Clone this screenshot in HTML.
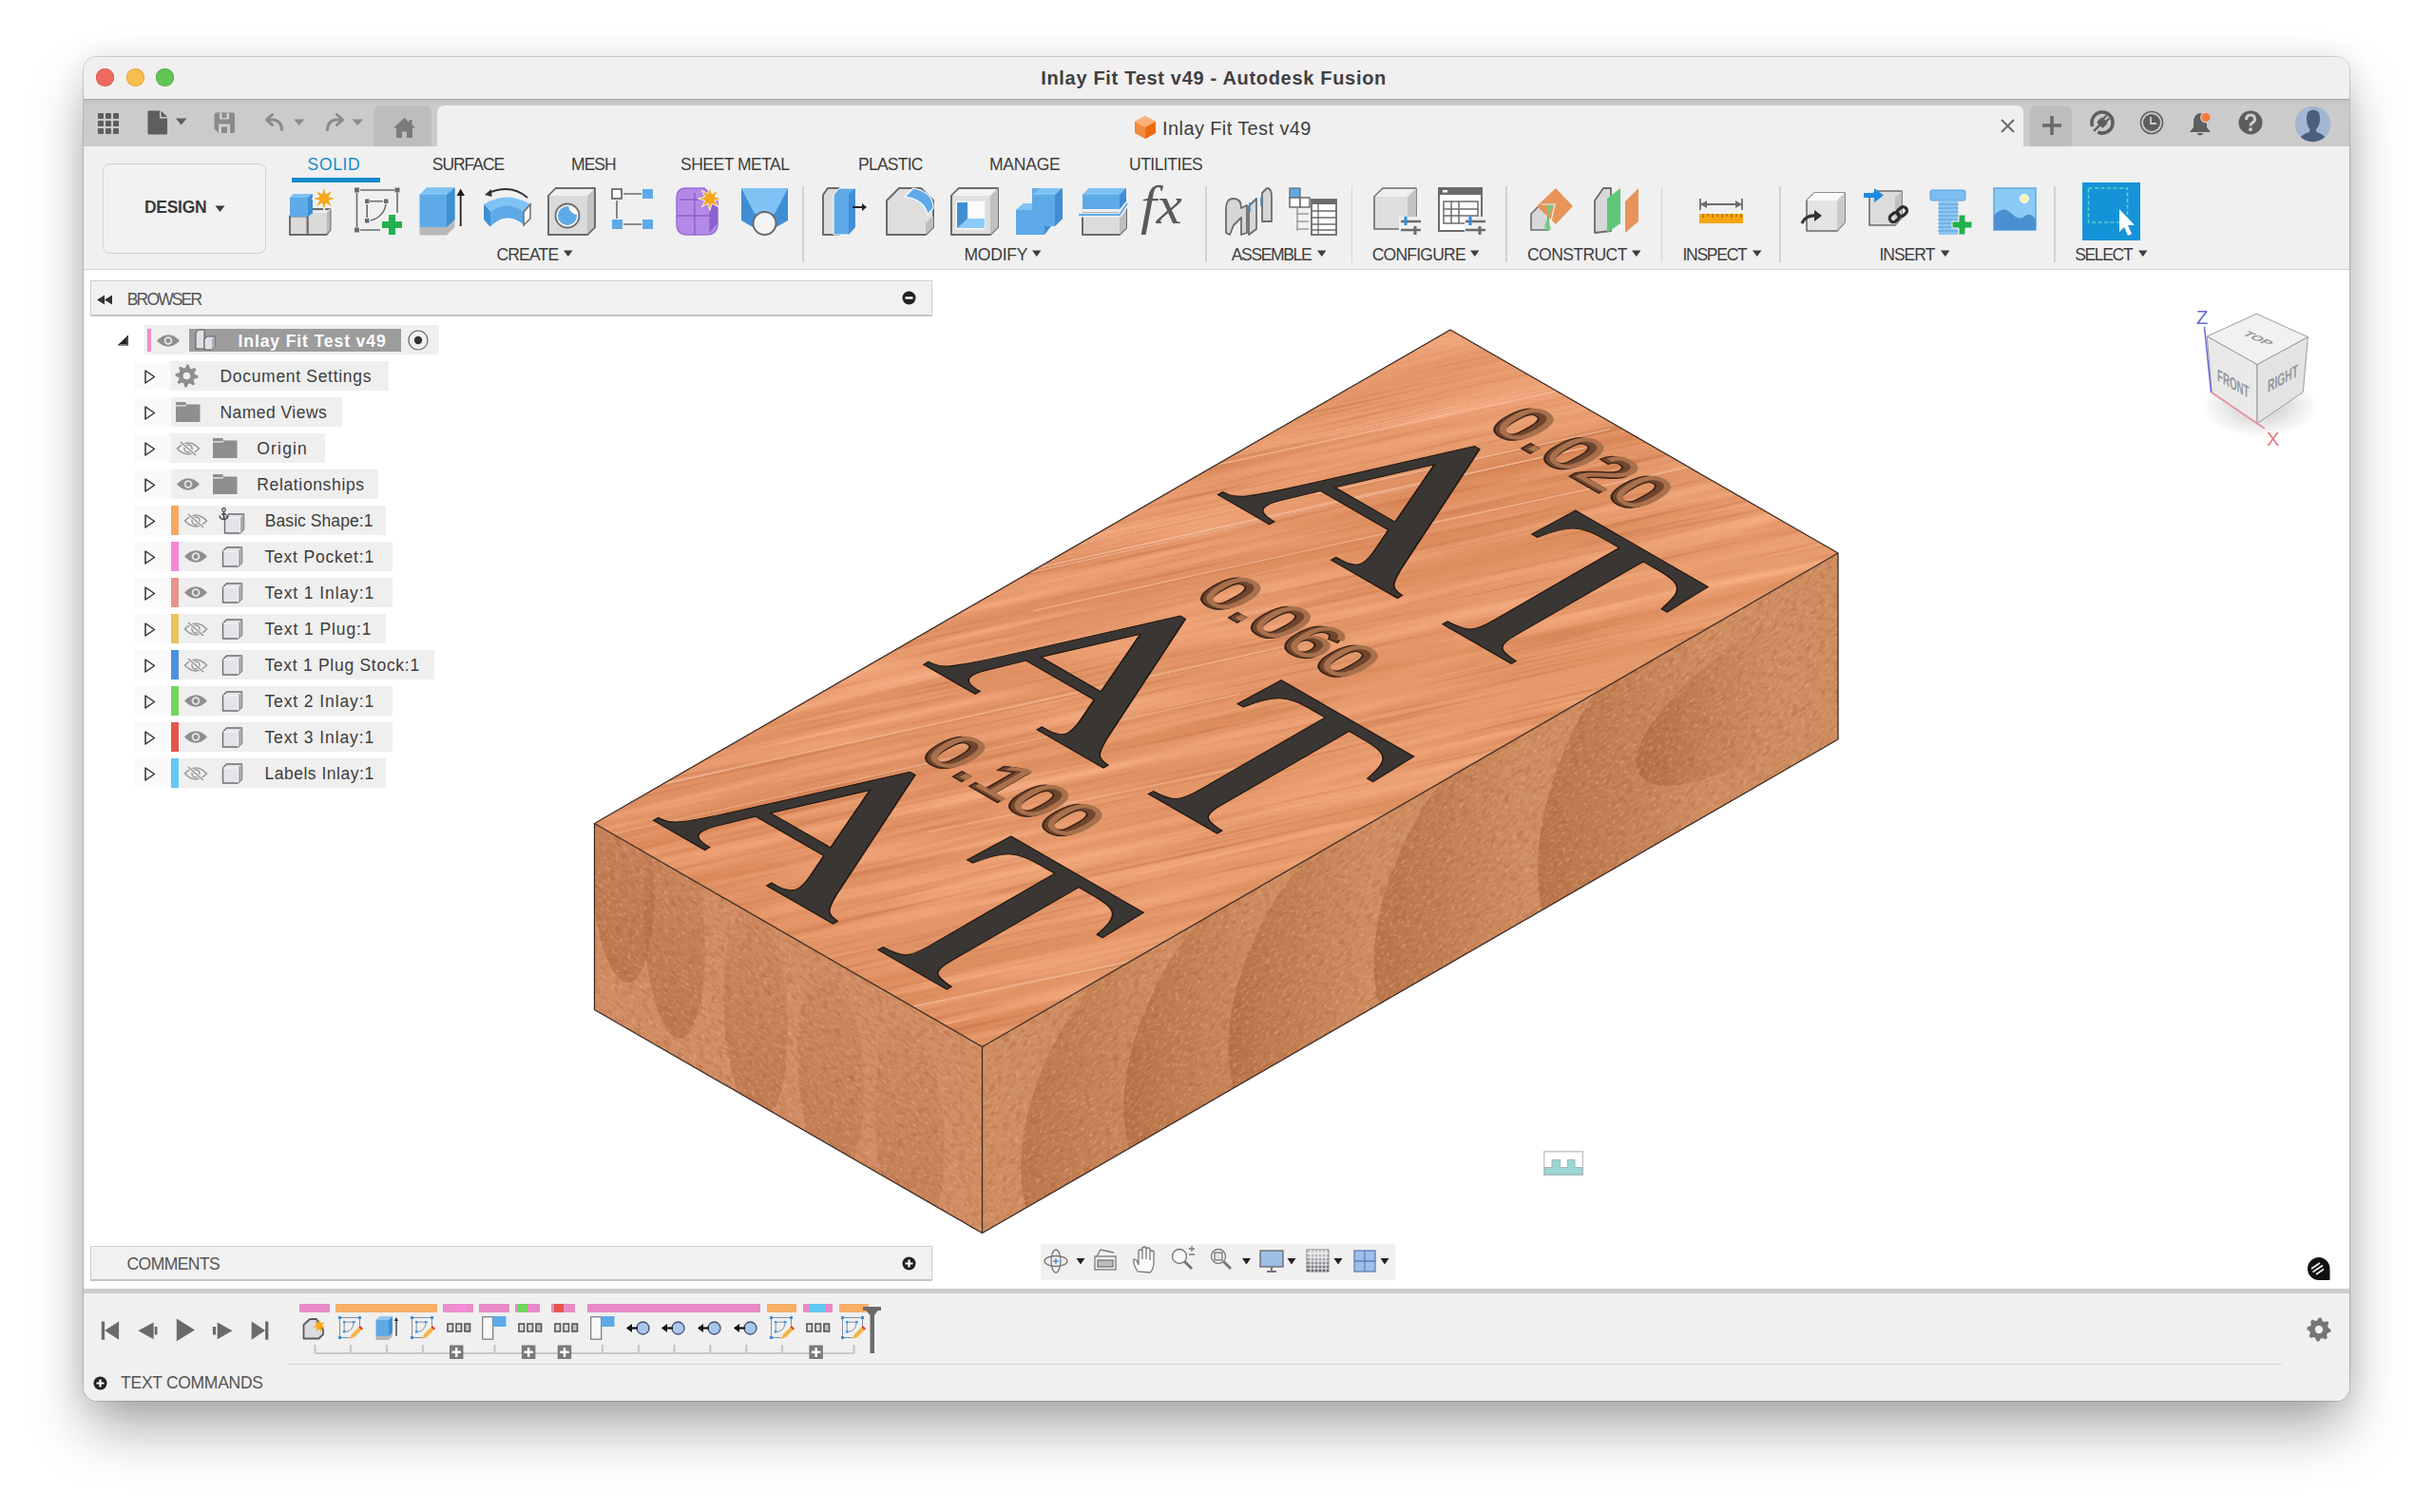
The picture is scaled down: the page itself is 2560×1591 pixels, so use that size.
<!DOCTYPE html>
<html><head><meta charset="utf-8">
<style>
*{margin:0;padding:0;box-sizing:border-box}
html,body{width:2560px;height:1591px;overflow:hidden;background:#fff;font-family:"Liberation Sans",sans-serif;color:#3c3c3c}
.a{position:absolute}
svg.a{overflow:visible}
#shadow{position:absolute;left:88px;top:60px;width:2384px;height:1414px;border-radius:14px;background:#f0f0f0;box-shadow:0 0 0 1px rgba(0,0,0,0.15),0 32px 60px -4px rgba(0,0,0,0.34),0 0 30px rgba(0,0,0,0.09)}
#ui{position:absolute;left:0;top:0;width:2560px;height:1591px;clip-path:inset(60px 88px 117px 88px round 14px)}
.tl{white-space:nowrap;line-height:1}
.dot{width:19px;height:19px;border-radius:50%;top:72px}
.tab{top:165px;font-size:18px;color:#3d3d3d}
.grp{top:259px;font-size:18px;color:#3d3d3d}
.sep{top:197px;width:1px;height:80px;background:#cfcfcf}
.row{height:31px;background:#efefef}
.rt{font-size:18px;color:#3d3d3d;top:7px}
</style></head><body>
<div id="shadow"></div>
<div id="ui">
<div class="a" style="left:88px;top:60px;width:2384px;height:44px;background:#f1eff0"></div>
<div class="a" style="left:88px;top:103.5px;width:2384px;height:1.2px;background:#a9a9a9"></div>
<div class="a" style="left:100.5px;top:72px;width:19px;height:19px;border-radius:50%;background:#ee6a5e;box-shadow:inset 0 0 0 0.8px #d55a50"></div>
<div class="a" style="left:132.5px;top:72px;width:19px;height:19px;border-radius:50%;background:#f5be4f;box-shadow:inset 0 0 0 0.8px #dba540"></div>
<div class="a" style="left:164px;top:72px;width:19px;height:19px;border-radius:50%;background:#5fc454;box-shadow:inset 0 0 0 0.8px #4cad41"></div>
<div class="a" style="left:88px;top:104px;width:2384px;height:50px;background:#cbcbcb"></div>
<div class="a" style="left:88px;top:104px;width:2384px;height:6px;background:linear-gradient(#c0c0c0,#cbcbcb)"></div>
<div class="a" style="left:88px;top:104px;width:2384px;height:1px;background:#a6a6a6"></div>
<div class="a" style="left:393px;top:111px;width:61px;height:43px;background:#bdbdbd;border-radius:7px 7px 0 0"></div>
<div class="a" style="left:460px;top:111px;width:1669px;height:43px;background:#f0f0f0;border-radius:7px 7px 0 0"></div>
<div class="a" style="left:2136px;top:111px;width:44px;height:43px;background:#bdbdbd;border-radius:7px 7px 0 0"></div>
<svg class="a" style="left:102px;top:118px" width="24" height="24"><rect x="1" y="1" width="6" height="6" rx="1" fill="#5e5e5e"/><rect x="1" y="9" width="6" height="6" rx="1" fill="#5e5e5e"/><rect x="1" y="17" width="6" height="6" rx="1" fill="#5e5e5e"/><rect x="9" y="1" width="6" height="6" rx="1" fill="#5e5e5e"/><rect x="9" y="9" width="6" height="6" rx="1" fill="#5e5e5e"/><rect x="9" y="17" width="6" height="6" rx="1" fill="#5e5e5e"/><rect x="17" y="1" width="6" height="6" rx="1" fill="#5e5e5e"/><rect x="17" y="9" width="6" height="6" rx="1" fill="#5e5e5e"/><rect x="17" y="17" width="6" height="6" rx="1" fill="#5e5e5e"/></svg>
<svg class="a" style="left:155px;top:116px" width="44" height="27"><path d="M0.5 1.5 Q0.5 0.5 1.5 0.5 H13 L21 8.5 V24.5 Q21 25.5 20 25.5 H1.5 Q0.5 25.5 0.5 24.5 Z" fill="#5e5e5e"/><path d="M13 0.5 V8.5 H21" fill="#cecece"/><path d="M14.5 0.5 L21 7 H14.5 Z" fill="#5e5e5e"/><path d="M30 8.5 H41.5 L35.7 15.5 Z" fill="#5e5e5e"/></svg>
<svg class="a" style="left:225px;top:118px" width="24" height="24"><path d="M0.5 2.5 Q0.5 0.5 2.5 0.5 H20 Q22 0.5 22 2.5 V20 Q22 22 20 22 H5 L0.5 17.5 Z" fill="#8a8a8a"/><rect x="6" y="1" width="10" height="6.5" fill="#cecece"/><rect x="8.5" y="1" width="5" height="5" fill="#8a8a8a"/><rect x="5" y="12.5" width="12" height="9.5" fill="#cecece"/><rect x="8" y="15.5" width="6" height="6.5" fill="#8a8a8a"/></svg>
<svg class="a" style="left:277px;top:118px" width="110" height="24"><g fill="none" stroke="#8a8a8a" stroke-width="3" stroke-linecap="round" stroke-linejoin="round"><path d="M4 8 H11 Q19 9 19.5 18.5"/><path d="M9.5 2.5 L3.5 8 L9.5 13.5"/><path d="M83 8 H76 Q68 9 67.5 18.5"/><path d="M77.5 2.5 L83.5 8 L77.5 13.5"/></g><path d="M32 7.5 H43.5 L37.7 14 Z M93.5 7.5 H105 L99.2 14 Z" fill="#8a8a8a"/></svg>
<svg class="a" style="left:413px;top:123px" width="25" height="23"><path d="M12.5 1 L24 11.5 H21 V22 H15 V15.5 H10 V22 H4 V11.5 H1 Z" fill="#7a7a7a"/><rect x="17.5" y="3" width="3" height="6" fill="#7a7a7a"/><rect x="11.3" y="17" width="2.4" height="5" fill="#bdbdbd"/></svg>
<svg class="a" style="left:1193px;top:121px" width="24" height="26"><polygon points="12,1 23,7 23,19 12,25 1,19 1,7" fill="#f38a3c"/><polygon points="12,1 23,7 12,13 1,7" fill="#fbb27a"/><polygon points="12,13 23,7 23,19 12,25" fill="#ec6a12"/></svg>
<svg class="a" style="left:2105px;top:125px" width="15" height="15"><path d="M1 1 L14 14 M14 1 L1 14" stroke="#6a6a6a" stroke-width="2"/></svg>
<svg class="a" style="left:2149px;top:122px" width="20" height="20"><path d="M10 0 V20 M0 10 H20" stroke="#6a6a6a" stroke-width="3.6"/></svg>
<svg class="a" style="left:2199px;top:116px" width="26" height="26"><path d="M2.7 16.8 A11 11 0 1 1 8.4 23" fill="none" stroke="#5e5e5e" stroke-width="3.6"/><g transform="rotate(45 13 13)"><rect x="8.5" y="9" width="9" height="8" rx="1.5" fill="#5e5e5e"/><rect x="9.8" y="4.5" width="2.2" height="5" fill="#5e5e5e"/><rect x="14" y="4.5" width="2.2" height="5" fill="#5e5e5e"/><rect x="11.8" y="16.5" width="2.4" height="9" fill="#5e5e5e"/></g></svg>
<svg class="a" style="left:2251px;top:116px" width="26" height="26"><circle cx="13" cy="13" r="11.5" fill="none" stroke="#5e5e5e" stroke-width="1.6"/><circle cx="13" cy="13" r="9" fill="#5e5e5e"/><path d="M12 7 V14 H18" fill="none" stroke="#cecece" stroke-width="1.8"/></svg>
<svg class="a" style="left:2302px;top:116px" width="28" height="28"><path d="M13 3 Q6 4 6 13 V18 L2 23 H24 L20 18 V13 Q20 4 13 3 Z" fill="#5e5e5e"/><path d="M9.5 24 Q13 29 16.5 24 Z" fill="#5e5e5e"/><circle cx="19" cy="7.5" r="5.3" fill="#f47d3a" stroke="#cecece" stroke-width="1.2"/></svg>
<svg class="a" style="left:2355px;top:116px" width="26" height="26"><circle cx="13" cy="13" r="12.5" fill="#5e5e5e"/><path d="M8.5 10 Q8.5 5 13 5 Q17.5 5 17.5 9.5 Q17.5 12 14.5 13.5 Q13 14.5 13 16.5" fill="none" stroke="#cecece" stroke-width="3"/><rect x="11.3" y="18.5" width="3.4" height="3.4" fill="#cecece"/></svg>
<svg class="a" style="left:2413.5px;top:110.5px" width="39" height="39"><defs><clipPath id="avc"><circle cx="19.5" cy="19.5" r="18.8"/></clipPath></defs><circle cx="19.5" cy="19.5" r="18.8" fill="#a3b7d2"/><g clip-path="url(#avc)" fill="#4b5f7e"><path d="M13 15 Q12 5 20 4.5 Q28 5 27 15 Q26.5 22 23 25 L23.5 28 Q33 30 35 40 H4 Q6 30 16 28 L16.5 25 Q13.5 22 13 15 Z"/></g></svg>
<div class="a" style="left:88px;top:154px;width:2384px;height:130px;background:#f0f0f0"></div>
<div class="a" style="left:88px;top:282.5px;width:2384px;height:1.5px;background:#d3d3d3"></div>
<div class="a" style="left:107.5px;top:172px;width:172px;height:95px;border:1.5px solid #d0d0d0;border-radius:8px;background:#f2f2f2"></div>
<svg class="a" style="left:226px;top:216px" width="12" height="8"><path d="M0.5 0.5 H10.5 L5.5 7 Z" fill="#3a3a3a"/></svg>
<div class="a" style="left:307px;top:187px;width:93px;height:5px;background:#1689c9"></div>
<svg class="a" style="left:304px;top:197px" width="50" height="50" viewBox="0 0 50 50">
<path d="M19.5 30.5 L19.5 26 L23 23 L43.5 23 L43.5 45 L39.5 50 L19.5 50 Z" fill="#dadada" stroke="#6b6b6b" stroke-width="2" stroke-linejoin="round"/>
<path d="M19.5 26 L40 26 L43.5 23" fill="none" stroke="#fff" stroke-width="1.2"/>
<path d="M40 26 L40 50" stroke="#b9b9b9" stroke-width="0"/>
<polygon points="40,26 43.5,23 43.5,45 40,49" fill="#b9b9b9"/>
<rect x="1" y="30.5" width="18.5" height="19.5" fill="#dadada" stroke="#6b6b6b" stroke-width="2"/>
<polygon points="1,11 5,7 25,7 25,27 19.5,31 1,31" fill="#5eaae8"/>
<polygon points="1,11 5,7 25,7 20,11" fill="#7fc2f4"/>
<polygon points="20,11 25,7 25,27 20,31" fill="#3f8ed4"/>
<polygon points="37.0,-1.0 39.1,6.9 46.2,2.8 42.1,9.9 50.0,12.0 42.1,14.1 46.2,21.2 39.1,17.1 37.0,25.0 34.9,17.1 27.8,21.2 31.9,14.1 24.0,12.0 31.9,9.9 27.8,2.8 34.9,6.9" fill="#f6a71c" stroke="#f3f3f3" stroke-width="1"/>
</svg>
<svg class="a" style="left:372.5px;top:197px" width="50" height="50" viewBox="0 0 50 50">
<g fill="#6b6b6b"><rect x="0" y="0.5" width="5" height="5"/><rect x="42.5" y="0.5" width="5" height="5"/><rect x="0" y="42.5" width="5" height="5"/>
<rect x="11" y="12.5" width="4.5" height="4.5"/><rect x="31" y="12.5" width="4.5" height="4.5"/><rect x="11" y="33" width="4.5" height="4.5"/></g>
<g stroke="#6b6b6b" stroke-width="1.6" fill="none"><path d="M6 3 H42 M2.5 6 V42 M45 6 V27 M6 45 H27 M16 14.8 H30 M13.2 18 V32 M33 18 Q31 31 17 35"/></g>
<path d="M36 29 H43 V36 H50 V43 H43 V50 H36 V43 H29 V36 H36 Z" fill="#22b14c"/>
</svg>
<svg class="a" style="left:441px;top:197px" width="50" height="50" viewBox="0 0 50 50">
<polygon points="0.5,42 29,42 37.5,34 37.5,42 29,50.5 0.5,50.5" fill="#b8b8b8"/>
<polygon points="0.5,8 8,0.5 37.5,0.5 37.5,34 29,42 0.5,42" fill="#5eaae8"/>
<polygon points="0.5,8 8,0.5 37.5,0.5 29,8" fill="#7fc2f4"/>
<polygon points="29,8 37.5,0.5 37.5,34 29,42" fill="#3f8ed4"/>
<path d="M43.7 41 V6" stroke="#222" stroke-width="1.8"/><path d="M39.5 9 L43.7 1.5 L48 9 Z" fill="#222"/>
</svg>
<svg class="a" style="left:508px;top:197px" width="50" height="50" viewBox="0 0 50 50">
<path d="M1 18 Q25 3 50 18 L50 33 L43 40 Q25 25 8 42 L1 34 Z" fill="#5eaae8" stroke="#fff" stroke-width="1"/>
<path d="M1 18 Q25 3 50 18 L43 26 Q25 13 8 26 Z" fill="#7fc2f4"/>
<path d="M1 18 L8 26 L8 42 L1 34 Z" fill="#3f8ed4"/>
<path d="M43 26 L50 18 L50 33 L43 40 Z" fill="#fff" stroke="#6b6b6b" stroke-width="1.5"/>
<path d="M47 11 Q30 -4 6 6" fill="none" stroke="#333" stroke-width="1.8"/><path d="M2 8 L9 2 L9.5 10 Z" fill="#333"/>
</svg>
<svg class="a" style="left:575.5px;top:197px" width="50" height="50" viewBox="0 0 50 50">
<polygon points="1,9 9,1 50,1 50,42 42,50 1,50" fill="#dadada" stroke="#6b6b6b" stroke-width="2" stroke-linejoin="round"/>
<polygon points="2,9 9,2 49,2 42,9" fill="#efefef"/>
<polygon points="42,9 49,2 49,42 42,49" fill="#c4c4c4"/>
<circle cx="21" cy="30" r="12.5" fill="#f4f4f4" stroke="#6b6b6b" stroke-width="1.8"/>
<circle cx="21" cy="30" r="10" fill="#5eaae8"/>
<path d="M24 20.5 A10 10 0 0 1 30.5 27 A9 9 0 0 1 24 20.5 Z" fill="#fff"/>
<path d="M22 20 Q24 28 31 29 Q31 21 22 20 Z" fill="#fff"/>
</svg>
<svg class="a" style="left:643px;top:197px" width="50" height="50" viewBox="0 0 50 50">
<rect x="1" y="2" width="10" height="10" fill="#fff" stroke="#6b6b6b" stroke-width="1.8"/>
<rect x="33" y="2" width="11" height="10" fill="#5eaae8"/><rect x="1" y="34" width="11" height="10" fill="#5eaae8"/><rect x="33" y="34" width="11" height="10" fill="#5eaae8"/>
<path d="M13 7 H32 M6 14 V33 M13 39 H32" stroke="#6b6b6b" stroke-width="1.6"/>
</svg>
<svg class="a" style="left:711px;top:197px" width="50" height="50" viewBox="0 0 50 50">
<path d="M10 1 H30 L44 14 V38 Q44 50 32 50 H12 Q1 50 1 38 V12 Q1 1 10 1 Z" fill="#b48ae8" stroke="#9a6dd6" stroke-width="1.5"/>
<path d="M4 13 H36 V47 M1 30 H44 M20 6 V50" stroke="#8a5ec8" stroke-width="1.3" fill="none"/>
<path d="M36 13 L44 20 V38 L36 47 Z" fill="#8c62cf"/>
<polygon points="36.0,-0.5 38.1,6.9 44.8,3.2 41.1,9.9 48.5,12.0 41.1,14.1 44.8,20.8 38.1,17.1 36.0,24.5 33.9,17.1 27.2,20.8 30.9,14.1 23.5,12.0 30.9,9.9 27.2,3.2 33.9,6.9" fill="#f6a71c" stroke="#f3f3f3" stroke-width="1"/>
</svg>
<svg class="a" style="left:779px;top:197px" width="50" height="50" viewBox="0 0 50 50">
<polygon points="1,1 50,1 50,35 36,43 15,43 1,35" fill="#3f8ed4"/>
<polygon points="1,1 50,1 36,28 15,28" fill="#7fc2f4"/>
<circle cx="25.5" cy="38" r="12" fill="#f4f4f4" stroke="#6b6b6b" stroke-width="2"/>
</svg>
<svg class="a" style="left:865px;top:197px" width="50" height="50" viewBox="0 0 50 50">
<polygon points="1,8 6,1 18,1 18,50 1,50" fill="#dcdcdc" stroke="#6b6b6b" stroke-width="2" stroke-linejoin="round"/>
<polygon points="12,8 18,1 35,1 35,42 28,50 12,50" fill="#5eaae8" stroke="#fff" stroke-width="1"/>
<polygon points="28,8 35,1 35,42 28,50" fill="#3f8ed4"/>
<path d="M32 21 H44" stroke="#222" stroke-width="1.8"/><path d="M42 17 L47 21 L42 25 Z" fill="#222"/>
</svg>
<svg class="a" style="left:932px;top:197px" width="50" height="50" viewBox="0 0 50 50">
<polygon points="1,14 14,1 27,1 37,1 50,14 50,42 42,50 1,50" fill="#dedede" stroke="#6b6b6b" stroke-width="2" stroke-linejoin="round"/>
<polygon points="42,38 50,30 50,42 42,50" fill="#bdbdbd"/>
<path d="M20 10 L29 1 Q50 5 50 22 L44 29 Q41 13 20 10 Z" fill="#5eaae8" stroke="#fff" stroke-width="1.2"/>
</svg>
<svg class="a" style="left:1000px;top:197px" width="50" height="50" viewBox="0 0 50 50">
<polygon points="1,9 9,1 50,1 50,42 42,50 1,50" fill="#dedede" stroke="#6b6b6b" stroke-width="2" stroke-linejoin="round"/>
<polygon points="2,9 9,2 49,2 42,9" fill="#f2f2f2"/>
<polygon points="42,9 50,1 50,42 42,50" fill="#c0c0c0"/>
<rect x="5.5" y="14.5" width="31" height="30" fill="#fafafa"/>
<polygon points="7,16 18,16 18,33 36,33 36,43 7,43" fill="#8ccbf7"/>
<polygon points="7,16 18,16 18,33 7,43" fill="#3f8ed4"/>
</svg>
<svg class="a" style="left:1067.5px;top:197px" width="50" height="50" viewBox="0 0 50 50">
<polygon points="1,24 9,17 18,17 18,1 50,1 50,33 42,41 31,41 31,50 1,50" fill="#5eaae8"/>
<polygon points="18,8 26,1 50,1 42,8" fill="#7fc2f4"/><polygon points="1,24 9,17 18,17 18,24" fill="#7fc2f4"/>
<polygon points="42,8 50,1 50,33 42,41" fill="#3f8ed4"/><polygon points="31,41 38,41 31,50" fill="#3f8ed4"/>
</svg>
<svg class="a" style="left:1134.5px;top:197px" width="50" height="50" viewBox="0 0 50 50">
<polygon points="4,27 42,27 50,20 50,43 43,50 4,50" fill="#dcdcdc" stroke="#6b6b6b" stroke-width="2" stroke-linejoin="round"/>
<polygon points="43,30 50,23 50,43 43,50" fill="#bebebe"/>
<polygon points="4,8 11,1 50,1 50,16 43,23 4,23" fill="#5eaae8"/>
<polygon points="4,8 11,1 50,1 43,8" fill="#7fc2f4"/><polygon points="43,8 50,1 50,16 43,23" fill="#3f8ed4"/>
<path d="M0 29 H43 L51 17" fill="none" stroke="#f0f0f0" stroke-width="5"/>
<path d="M0 29 H43 L51 17" fill="none" stroke="#5eaae8" stroke-width="1.8"/>
</svg>
<svg class="a" style="left:1202px;top:197px" width="50" height="50" viewBox="0 0 50 50"><text x="-2" y="38" font-family="Liberation Serif" font-style="italic" font-size="58" fill="#5a5a5a" transform="scale(1.05 1)">fx</text></svg>
<svg class="a" style="left:1287.5px;top:197px" width="50" height="50" viewBox="0 0 50 50">
<path d="M2 48 V22 Q2 12 10 12 Q18 12 18 22 L24 19 V48 L18 50 V32 L10 40 L6 50 Z" fill="#d6d6d6" stroke="#6b6b6b" stroke-width="1.8" stroke-linejoin="round"/>
<path d="M26 50 V20 L34 12 V44 Z" fill="#d6d6d6" stroke="#6b6b6b" stroke-width="1.8" stroke-linejoin="round"/>
<path d="M40 36 V6 L45 1 Q50 1 50 10 V36 Z" fill="#d6d6d6" stroke="#6b6b6b" stroke-width="1.8" stroke-linejoin="round"/>
<path d="M27 16 V26 M39 10 V20" stroke="#3c8edc" stroke-width="1.6"/>
</svg>
<svg class="a" style="left:1355.5px;top:197px" width="50" height="50" viewBox="0 0 50 50">
<rect x="1" y="1" width="11" height="10" fill="#5eaae8" stroke="#6b6b6b" stroke-width="1.2"/>
<rect x="1" y="11" width="11" height="10" fill="#fff" stroke="#6b6b6b" stroke-width="1.5"/><rect x="12" y="11" width="10" height="10" fill="#fff" stroke="#6b6b6b" stroke-width="1.5"/>
<path d="M9 22 V46 M9 28 H21 M9 36 H21 M9 44 H21" stroke="#9a9a9a" stroke-width="1.5"/>
<rect x="24" y="13" width="26" height="37" fill="#fff" stroke="#6b6b6b" stroke-width="1.8"/>
<rect x="24" y="13" width="26" height="5" fill="#6b6b6b"/>
<path d="M24 25 H50 M24 32 H50 M24 39 H50 M24 45 H50 M31 18 V50" stroke="#6b6b6b" stroke-width="1.3"/>
</svg>
<svg class="a" style="left:1444.5px;top:197px" width="50" height="50" viewBox="0 0 50 50">
<polygon points="1,10 10,1 45,1 45,36 36,44 1,44" fill="#dedede" stroke="#6b6b6b" stroke-width="1.6" stroke-linejoin="round"/>
<polygon points="36,10 45,1 45,36 36,44" fill="#c3c3c3"/><polygon points="2,10 10,2 44,2 36,10" fill="#efefef"/>
<rect x="27" y="31" width="23" height="19" fill="#f0f0f0"/>
<path d="M29 36 H50 M29 45 H50" stroke="#6b6b6b" stroke-width="2.6"/><path d="M44 41 V50" stroke="#6b6b6b" stroke-width="3"/><path d="M34 31 V40" stroke="#2f8ee0" stroke-width="3"/>
</svg>
<svg class="a" style="left:1513px;top:197px" width="50" height="50" viewBox="0 0 50 50">
<rect x="1" y="1" width="45" height="45" fill="#fff" stroke="#6b6b6b" stroke-width="2"/>
<rect x="1" y="1" width="45" height="7" fill="#6b6b6b"/><rect x="5" y="3" width="5" height="2.5" fill="#fff"/>
<path d="M6 15 H42 V38 H6 Z M6 23 H42 M6 30 H42 M14 15 V38 M22 15 V38" fill="none" stroke="#6b6b6b" stroke-width="1.5"/>
<rect x="28" y="31" width="22" height="19" fill="#f0f0f0"/>
<path d="M29 36 H50 M29 45 H50" stroke="#6b6b6b" stroke-width="2.6"/><path d="M44 41 V50" stroke="#6b6b6b" stroke-width="3"/><path d="M34 31 V40" stroke="#2f8ee0" stroke-width="3"/>
</svg>
<svg class="a" style="left:1609px;top:197px" width="50" height="50" viewBox="0 0 50 50">
<polygon points="2,28 9,21 20,21 20,45 2,45" fill="#d8d8d8" stroke="#6b6b6b" stroke-width="1.6"/>
<polygon points="28,1 46,20 28,39 8,20" fill="#e8945a"/>
<polygon points="18,18 26,18 16,40 17,45 23,45" fill="#6ccf7e" opacity="0.8"/>
<path d="M22 40 L27 18 H13" fill="none" stroke="#f0f0f0" stroke-width="1.2"/>
</svg>
<svg class="a" style="left:1677px;top:197px" width="50" height="50" viewBox="0 0 50 50">
<polygon points="1,14 10,1 18,1 18,46 1,48" fill="#d8d8d8" stroke="#6b6b6b" stroke-width="1.8" stroke-linejoin="round"/>
<polygon points="14,12 28,1 28,38 14,48" fill="#5ec777"/>
<polygon points="33,15 47,1 47,36 33,48" fill="#e8945a"/>
</svg>
<svg class="a" style="left:1959.5px;top:197px" width="50" height="50" viewBox="0 0 50 50">
<polygon points="7,11 14,4 41,4 41,32 34,40 7,40" fill="#dcdcdc" stroke="#6b6b6b" stroke-width="1.6" stroke-linejoin="round"/>
<polygon points="34,11 41,4 41,32 34,40" fill="#c0c0c0"/>
<path d="M1 8.5 H13" stroke="#1f8ae0" stroke-width="5"/><path d="M12 1 L22 8.5 L12 16 Z" fill="#1f8ae0"/>
<g fill="none" stroke="#2e2e2e" stroke-width="3.2"><rect x="28" y="28" width="11" height="8" rx="4" transform="rotate(-40 33 32)"/><rect x="36" y="22" width="11" height="8" rx="4" transform="rotate(-40 41 26)"/></g>
</svg>
<svg class="a" style="left:2097px;top:197px" width="50" height="50" viewBox="0 0 50 50">
<rect x="1" y="1" width="44" height="44" fill="#8ccaf6" stroke="#5ea8e4" stroke-width="1.5"/>
<path d="M1 45 V30 Q10 18 20 28 Q28 36 34 30 Q40 26 45 34 V45 Z" fill="#4a90d0"/>
<circle cx="33" cy="12" r="4.5" fill="#fbf3b0" stroke="#fff" stroke-width="1"/>
</svg>
<svg class="a" style="left:1894.5px;top:202px" width="50" height="50" viewBox="0 0 50 50">
<polygon points="6,9 14,1 46,1 46,32 38,41 6,41" fill="#e4e4e4" stroke="#6b6b6b" stroke-width="1.6" stroke-linejoin="round"/>
<polygon points="6,9 14,1 46,1 38,9" fill="#fafafa"/><polygon points="38,9 46,1 46,32 38,41" fill="#cacaca"/>
<path d="M1 33 Q5 24 16 25" fill="none" stroke="#333" stroke-width="3.2"/><path d="M14 19 L22 25 L14 31 Z" fill="#333"/>
</svg>
<svg class="a" style="left:2030px;top:199px" width="50" height="50" viewBox="0 0 50 50">
<rect x="1" y="1" width="37" height="11" rx="2" fill="#7cbdf0" stroke="#5aa0dc" stroke-width="1"/>
<rect x="10" y="12" width="20" height="36" fill="#8cc6f2"/>
<path d="M9 16 H31 M9 20 H31 M9 24 H31 M9 28 H31 M9 32 H31 M9 36 H31 M9 40 H31 M9 44 H31" stroke="#5a9ed8" stroke-width="1.2"/>
<path d="M31 27 H38 V34 H45 V41 H38 V48 H31 V41 H24 V34 H31 Z" fill="#22b14c" stroke="#f0f0f0" stroke-width="1"/>
</svg>
<svg class="a" style="left:1787px;top:208px" width="50" height="50" viewBox="0 0 50 50">
<path d="M2 1 V13 M46 1 V13 M3 7 H45" stroke="#6b6b6b" stroke-width="1.8"/>
<path d="M2 7 L9 3 V11 Z M46 7 L39 3 V11 Z" fill="#6b6b6b"/>
<rect x="1" y="17" width="46" height="10" fill="#f5a70d"/>
<path d="M5 17 V21 M10 17 V20 M15 17 V21 M20 17 V20 M25 17 V21 M30 17 V20 M35 17 V21 M40 17 V20 M45 17 V21" stroke="#7a5a10" stroke-width="1"/>
</svg>
<svg class="a" style="left:2190.5px;top:192px" width="61" height="61"><rect x="0" y="0" width="61" height="61" fill="#1593d8"/><rect x="6.5" y="6" width="41" height="36" fill="none" stroke="#5fd3c8" stroke-width="1.6" stroke-dasharray="4 2.5"/><path d="M39 28 L39 52 L44 47 L48 56 L52 54 L48 45 L55 45 Z" fill="#fff"/></svg>
<div class="a" style="left:844.3px;top:196px;width:1.5px;height:80px;background:#d2d2d2"></div>
<div class="a" style="left:1268.0px;top:196px;width:1.5px;height:80px;background:#d2d2d2"></div>
<div class="a" style="left:1421.5px;top:196px;width:1.5px;height:80px;background:#d2d2d2"></div>
<div class="a" style="left:1584.0px;top:196px;width:1.5px;height:80px;background:#d2d2d2"></div>
<div class="a" style="left:1747.5px;top:196px;width:1.5px;height:80px;background:#d2d2d2"></div>
<div class="a" style="left:1872.0px;top:196px;width:1.5px;height:80px;background:#d2d2d2"></div>
<div class="a" style="left:2161.0px;top:196px;width:1.5px;height:80px;background:#d2d2d2"></div>
<svg class="a" style="left:593.2px;top:263px" width="10" height="8"><path d="M0 0.5 H9.5 L4.75 7 Z" fill="#3d3d3d"/></svg>
<svg class="a" style="left:1085.7px;top:263px" width="10" height="8"><path d="M0 0.5 H9.5 L4.75 7 Z" fill="#3d3d3d"/></svg>
<svg class="a" style="left:1386px;top:263px" width="10" height="8"><path d="M0 0.5 H9.5 L4.75 7 Z" fill="#3d3d3d"/></svg>
<svg class="a" style="left:1546.8px;top:263px" width="10" height="8"><path d="M0 0.5 H9.5 L4.75 7 Z" fill="#3d3d3d"/></svg>
<svg class="a" style="left:1717px;top:263px" width="10" height="8"><path d="M0 0.5 H9.5 L4.75 7 Z" fill="#3d3d3d"/></svg>
<svg class="a" style="left:1843.5px;top:263px" width="10" height="8"><path d="M0 0.5 H9.5 L4.75 7 Z" fill="#3d3d3d"/></svg>
<svg class="a" style="left:2042px;top:263px" width="10" height="8"><path d="M0 0.5 H9.5 L4.75 7 Z" fill="#3d3d3d"/></svg>
<svg class="a" style="left:2249.6px;top:263px" width="10" height="8"><path d="M0 0.5 H9.5 L4.75 7 Z" fill="#3d3d3d"/></svg>
<div class="a" style="left:88px;top:284px;width:2384px;height:1072px;background:#fff"></div>
<div class="a tl" style="left:1095.2px;top:72.0px;font-size:20px;font-weight:bold;color:#404040;letter-spacing:0.69px;">Inlay Fit Test v49 - Autodesk Fusion</div>
<div class="a tl" style="left:1223.1px;top:125.4px;font-size:20px;color:#3d3d3d;letter-spacing:0.39px;">Inlay Fit Test v49</div>
<div class="a tl" style="left:151.9px;top:210.3px;font-size:17.5px;font-weight:bold;color:#3a3a3a;letter-spacing:-0.27px;">DESIGN</div>
<div class="a tl" style="left:323.6px;top:164.8px;font-size:17.5px;color:#1a8ac6;letter-spacing:0.66px;">SOLID</div>
<div class="a tl" style="left:454.8px;top:164.8px;font-size:17.5px;color:#3d3d3d;letter-spacing:-1.05px;">SURFACE</div>
<div class="a tl" style="left:601.0px;top:164.8px;font-size:17.5px;color:#3d3d3d;letter-spacing:-0.94px;">MESH</div>
<div class="a tl" style="left:716.0px;top:164.8px;font-size:17.5px;color:#3d3d3d;letter-spacing:-0.50px;">SHEET METAL</div>
<div class="a tl" style="left:903.0px;top:164.8px;font-size:17.5px;color:#3d3d3d;letter-spacing:-0.76px;">PLASTIC</div>
<div class="a tl" style="left:1041.0px;top:164.8px;font-size:17.5px;color:#3d3d3d;letter-spacing:-0.22px;">MANAGE</div>
<div class="a tl" style="left:1188.0px;top:164.8px;font-size:17.5px;color:#3d3d3d;letter-spacing:-0.49px;">UTILITIES</div>
<div class="a tl" style="left:522.4px;top:260.4px;font-size:17.5px;color:#3d3d3d;letter-spacing:-0.79px;">CREATE</div>
<div class="a tl" style="left:1014.4px;top:260.4px;font-size:17.5px;color:#3d3d3d;letter-spacing:-0.18px;">MODIFY</div>
<div class="a tl" style="left:1295.8px;top:260.4px;font-size:17.5px;color:#3d3d3d;letter-spacing:-1.36px;">ASSEMBLE</div>
<div class="a tl" style="left:1443.7px;top:260.4px;font-size:17.5px;color:#3d3d3d;letter-spacing:-0.76px;">CONFIGURE</div>
<div class="a tl" style="left:1607.0px;top:260.4px;font-size:17.5px;color:#3d3d3d;letter-spacing:-0.56px;">CONSTRUCT</div>
<div class="a tl" style="left:1770.5px;top:260.4px;font-size:17.5px;color:#3d3d3d;letter-spacing:-1.27px;">INSPECT</div>
<div class="a tl" style="left:1977.4px;top:260.4px;font-size:17.5px;color:#3d3d3d;letter-spacing:-0.98px;">INSERT</div>
<div class="a tl" style="left:2183.2px;top:260.4px;font-size:17.5px;color:#3d3d3d;letter-spacing:-1.33px;">SELECT</div>
<div class="a" style="left:95px;top:295px;width:886px;height:38px;background:#f1f1f1;border:1px solid #cdcdcd;border-bottom:2px solid #c4c4c4"></div>
<svg class="a" style="left:102px;top:310px" width="17" height="11"><path d="M0 5.5 L8 0.5 V10.5 Z M8 5.5 L16 0.5 V10.5 Z" fill="#333"/></svg>
<svg class="a" style="left:949px;top:306px" width="15" height="15"><circle cx="7.5" cy="7.5" r="7" fill="#222"/><rect x="3.5" y="6.3" width="8" height="2.4" fill="#fff"/></svg>
<div class="a" style="left:152px;top:342px;width:310px;height:31px;background:#efefef"></div>
<svg class="a" style="left:123px;top:352px" width="13" height="12"><path d="M12 0.5 V11.5 H0.5 Z" fill="#222"/><path d="M11 3 V10.5 H3" fill="none" stroke="#888" stroke-width="0.8"/></svg>
<div class="a" style="left:154.5px;top:345.5px;width:4.5px;height:24.5px;background:#ea8fc4"></div>
<svg class="a" style="left:164px;top:349.5px" width="26" height="17"><path d="M1 8.5 Q13 -4 25 8.5 Q13 21 1 8.5 Z" fill="#8e8e8e"/><circle cx="13" cy="8.5" r="4.3" fill="#e8e8e8"/><circle cx="13" cy="8.5" r="2.5" fill="#8e8e8e"/></svg>
<div class="a" style="left:199px;top:345.5px;width:223px;height:24.5px;background:#9c9c9c"></div>
<svg class="a" style="left:205px;top:346px" width="23" height="23"><polygon points="1,4 4,1 10,1 10,21 1,21" fill="#dfe1e6" stroke="#555" stroke-width="1"/><polygon points="10,11 13,8 21,8 21,19 18,22 10,22" fill="#dfe1e6" stroke="#555" stroke-width="1"/><polygon points="18,11 21,8 21,19 18,22" fill="#a8abb3"/></svg>
<svg class="a" style="left:429px;top:347px" width="22" height="22"><circle cx="11" cy="11" r="10" fill="#eef0f4" stroke="#666" stroke-width="1.2"/><circle cx="11" cy="11" r="4.2" fill="#333"/></svg>
<div class="a" style="left:141px;top:380px;width:268.2px;height:31px;background:#fafafa"></div>
<div class="a" style="left:180px;top:380px;width:229.2px;height:31px;background:#efefef"></div>
<svg class="a" style="left:152px;top:388.5px" width="12" height="15"><path d="M1 1 L10.5 7.5 L1 14 Z" fill="none" stroke="#333" stroke-width="1.5" stroke-linejoin="round"/></svg>
<svg class="a" style="left:184px;top:383px" width="25" height="25"><polygon points="24.5,12.5 24.3,14.8 20.4,15.8 19.6,17.2 21.0,21.0 19.2,22.5 15.8,20.4 14.2,20.8 12.5,24.5 10.2,24.3 9.2,20.4 7.8,19.6 4.0,21.0 2.5,19.2 4.6,15.8 4.2,14.2 0.5,12.5 0.7,10.2 4.6,9.2 5.4,7.8 4.0,4.0 5.8,2.5 9.2,4.6 10.8,4.2 12.5,0.5 14.8,0.7 15.8,4.6 17.2,5.4 21.0,4.0 22.5,5.8 20.4,9.2 20.8,10.8" fill="#8e8e8e"/><circle cx="12.5" cy="12.5" r="3.8" fill="#efefef"/></svg>
<div class="a" style="left:141px;top:418px;width:218.60000000000002px;height:31px;background:#fafafa"></div>
<div class="a" style="left:180px;top:418px;width:179.60000000000002px;height:31px;background:#efefef"></div>
<svg class="a" style="left:152px;top:426.5px" width="12" height="15"><path d="M1 1 L10.5 7.5 L1 14 Z" fill="none" stroke="#333" stroke-width="1.5" stroke-linejoin="round"/></svg>
<svg class="a" style="left:184.5px;top:423px" width="26" height="21"><path d="M0 0 H10 L11.5 2.5 H10 V4 H0 Z" fill="#8e8e8e"/><rect x="0" y="2.5" width="25.5" height="18.5" fill="#8e8e8e"/><rect x="0" y="3.3" width="11" height="1.2" fill="#f0f0f0"/></svg>
<div class="a" style="left:141px;top:456px;width:200.89999999999998px;height:31px;background:#fafafa"></div>
<div class="a" style="left:180px;top:456px;width:161.89999999999998px;height:31px;background:#efefef"></div>
<svg class="a" style="left:152px;top:464.5px" width="12" height="15"><path d="M1 1 L10.5 7.5 L1 14 Z" fill="none" stroke="#333" stroke-width="1.5" stroke-linejoin="round"/></svg>
<svg class="a" style="left:184.5px;top:462.5px" width="26" height="18"><path d="M1.5 9 Q13 -3 24.5 9 Q13 21 1.5 9 Z" fill="none" stroke="#9a9a9a" stroke-width="1.6"/><circle cx="13" cy="9" r="4" fill="none" stroke="#9a9a9a" stroke-width="1.6"/><path d="M5 2 L21 16" stroke="#f0f0f0" stroke-width="3.5"/><path d="M5 2 L21 16" stroke="#9a9a9a" stroke-width="1.6"/></svg>
<svg class="a" style="left:224px;top:461px" width="26" height="21"><path d="M0 0 H10 L11.5 2.5 H10 V4 H0 Z" fill="#8e8e8e"/><rect x="0" y="2.5" width="25.5" height="18.5" fill="#8e8e8e"/><rect x="0" y="3.3" width="11" height="1.2" fill="#f0f0f0"/></svg>
<div class="a" style="left:141px;top:494px;width:257.4px;height:31px;background:#fafafa"></div>
<div class="a" style="left:180px;top:494px;width:218.39999999999998px;height:31px;background:#efefef"></div>
<svg class="a" style="left:152px;top:502.5px" width="12" height="15"><path d="M1 1 L10.5 7.5 L1 14 Z" fill="none" stroke="#333" stroke-width="1.5" stroke-linejoin="round"/></svg>
<svg class="a" style="left:184.5px;top:501px" width="26" height="17"><path d="M1 8.5 Q13 -4 25 8.5 Q13 21 1 8.5 Z" fill="#8e8e8e"/><circle cx="13" cy="8.5" r="4.3" fill="#e8e8e8"/><circle cx="13" cy="8.5" r="2.5" fill="#8e8e8e"/></svg>
<svg class="a" style="left:224px;top:499px" width="26" height="21"><path d="M0 0 H10 L11.5 2.5 H10 V4 H0 Z" fill="#8e8e8e"/><rect x="0" y="2.5" width="25.5" height="18.5" fill="#8e8e8e"/><rect x="0" y="3.3" width="11" height="1.2" fill="#f0f0f0"/></svg>
<div class="a" style="left:141px;top:532px;width:265px;height:31px;background:#fafafa"></div>
<div class="a" style="left:180px;top:532px;width:226px;height:31px;background:#efefef"></div>
<svg class="a" style="left:152px;top:540.5px" width="12" height="15"><path d="M1 1 L10.5 7.5 L1 14 Z" fill="none" stroke="#333" stroke-width="1.5" stroke-linejoin="round"/></svg>
<div class="a" style="left:180px;top:532px;width:7.5px;height:31px;background:#f6a862"></div>
<svg class="a" style="left:192.5px;top:538.5px" width="26" height="18"><path d="M1.5 9 Q13 -3 24.5 9 Q13 21 1.5 9 Z" fill="none" stroke="#9a9a9a" stroke-width="1.6"/><circle cx="13" cy="9" r="4" fill="none" stroke="#9a9a9a" stroke-width="1.6"/><path d="M5 2 L21 16" stroke="#f0f0f0" stroke-width="3.5"/><path d="M5 2 L21 16" stroke="#9a9a9a" stroke-width="1.6"/></svg>
<svg class="a" style="left:235px;top:539.5px" width="23" height="22"><polygon points="1.5,5 5.5,1 21.5,1 21.5,17 17.5,21 1.5,21" fill="#e2e4ea" stroke="#6e6e6e" stroke-width="1.4" stroke-linejoin="round"/><polygon points="17.5,5 21.5,1 21.5,17 17.5,21" fill="#a9acb5"/><path d="M1.5 5 H17.5 V21" fill="none" stroke="#fff" stroke-width="0.8"/></svg>
<svg class="a" style="left:230px;top:534px" width="14" height="15"><circle cx="5.5" cy="2.5" r="1.8" fill="none" stroke="#444" stroke-width="1.2"/><path d="M5.5 4 V12 M1 8.5 Q1.5 12.5 5.5 12.5 Q9.5 12.5 10 8.5 M3 7 H8" fill="none" stroke="#444" stroke-width="1.4"/></svg>
<div class="a" style="left:141px;top:570px;width:271.6px;height:31px;background:#fafafa"></div>
<div class="a" style="left:180px;top:570px;width:232.60000000000002px;height:31px;background:#efefef"></div>
<svg class="a" style="left:152px;top:578.5px" width="12" height="15"><path d="M1 1 L10.5 7.5 L1 14 Z" fill="none" stroke="#333" stroke-width="1.5" stroke-linejoin="round"/></svg>
<div class="a" style="left:180px;top:570px;width:7.5px;height:31px;background:#f787d6"></div>
<svg class="a" style="left:192.5px;top:577px" width="26" height="17"><path d="M1 8.5 Q13 -4 25 8.5 Q13 21 1 8.5 Z" fill="#8e8e8e"/><circle cx="13" cy="8.5" r="4.3" fill="#e8e8e8"/><circle cx="13" cy="8.5" r="2.5" fill="#8e8e8e"/></svg>
<svg class="a" style="left:233px;top:574.5px" width="23" height="22"><polygon points="1.5,5 5.5,1 21.5,1 21.5,17 17.5,21 1.5,21" fill="#e2e4ea" stroke="#6e6e6e" stroke-width="1.4" stroke-linejoin="round"/><polygon points="17.5,5 21.5,1 21.5,17 17.5,21" fill="#a9acb5"/><path d="M1.5 5 H17.5 V21" fill="none" stroke="#fff" stroke-width="0.8"/></svg>
<div class="a" style="left:141px;top:608px;width:271.6px;height:31px;background:#fafafa"></div>
<div class="a" style="left:180px;top:608px;width:232.60000000000002px;height:31px;background:#efefef"></div>
<svg class="a" style="left:152px;top:616.5px" width="12" height="15"><path d="M1 1 L10.5 7.5 L1 14 Z" fill="none" stroke="#333" stroke-width="1.5" stroke-linejoin="round"/></svg>
<div class="a" style="left:180px;top:608px;width:7.5px;height:31px;background:#e5958b"></div>
<svg class="a" style="left:192.5px;top:615px" width="26" height="17"><path d="M1 8.5 Q13 -4 25 8.5 Q13 21 1 8.5 Z" fill="#8e8e8e"/><circle cx="13" cy="8.5" r="4.3" fill="#e8e8e8"/><circle cx="13" cy="8.5" r="2.5" fill="#8e8e8e"/></svg>
<svg class="a" style="left:233px;top:612.5px" width="23" height="22"><polygon points="1.5,5 5.5,1 21.5,1 21.5,17 17.5,21 1.5,21" fill="#e2e4ea" stroke="#6e6e6e" stroke-width="1.4" stroke-linejoin="round"/><polygon points="17.5,5 21.5,1 21.5,17 17.5,21" fill="#a9acb5"/><path d="M1.5 5 H17.5 V21" fill="none" stroke="#fff" stroke-width="0.8"/></svg>
<div class="a" style="left:141px;top:646px;width:265px;height:31px;background:#fafafa"></div>
<div class="a" style="left:180px;top:646px;width:226px;height:31px;background:#efefef"></div>
<svg class="a" style="left:152px;top:654.5px" width="12" height="15"><path d="M1 1 L10.5 7.5 L1 14 Z" fill="none" stroke="#333" stroke-width="1.5" stroke-linejoin="round"/></svg>
<div class="a" style="left:180px;top:646px;width:7.5px;height:31px;background:#e9c35f"></div>
<svg class="a" style="left:192.5px;top:652.5px" width="26" height="18"><path d="M1.5 9 Q13 -3 24.5 9 Q13 21 1.5 9 Z" fill="none" stroke="#9a9a9a" stroke-width="1.6"/><circle cx="13" cy="9" r="4" fill="none" stroke="#9a9a9a" stroke-width="1.6"/><path d="M5 2 L21 16" stroke="#f0f0f0" stroke-width="3.5"/><path d="M5 2 L21 16" stroke="#9a9a9a" stroke-width="1.6"/></svg>
<svg class="a" style="left:233px;top:650.5px" width="23" height="22"><polygon points="1.5,5 5.5,1 21.5,1 21.5,17 17.5,21 1.5,21" fill="#e2e4ea" stroke="#6e6e6e" stroke-width="1.4" stroke-linejoin="round"/><polygon points="17.5,5 21.5,1 21.5,17 17.5,21" fill="#a9acb5"/><path d="M1.5 5 H17.5 V21" fill="none" stroke="#fff" stroke-width="0.8"/></svg>
<div class="a" style="left:141px;top:684px;width:316px;height:31px;background:#fafafa"></div>
<div class="a" style="left:180px;top:684px;width:277px;height:31px;background:#efefef"></div>
<svg class="a" style="left:152px;top:692.5px" width="12" height="15"><path d="M1 1 L10.5 7.5 L1 14 Z" fill="none" stroke="#333" stroke-width="1.5" stroke-linejoin="round"/></svg>
<div class="a" style="left:180px;top:684px;width:7.5px;height:31px;background:#4c90e0"></div>
<svg class="a" style="left:192.5px;top:690.5px" width="26" height="18"><path d="M1.5 9 Q13 -3 24.5 9 Q13 21 1.5 9 Z" fill="none" stroke="#9a9a9a" stroke-width="1.6"/><circle cx="13" cy="9" r="4" fill="none" stroke="#9a9a9a" stroke-width="1.6"/><path d="M5 2 L21 16" stroke="#f0f0f0" stroke-width="3.5"/><path d="M5 2 L21 16" stroke="#9a9a9a" stroke-width="1.6"/></svg>
<svg class="a" style="left:233px;top:688.5px" width="23" height="22"><polygon points="1.5,5 5.5,1 21.5,1 21.5,17 17.5,21 1.5,21" fill="#e2e4ea" stroke="#6e6e6e" stroke-width="1.4" stroke-linejoin="round"/><polygon points="17.5,5 21.5,1 21.5,17 17.5,21" fill="#a9acb5"/><path d="M1.5 5 H17.5 V21" fill="none" stroke="#fff" stroke-width="0.8"/></svg>
<div class="a" style="left:141px;top:722px;width:271.6px;height:31px;background:#fafafa"></div>
<div class="a" style="left:180px;top:722px;width:232.60000000000002px;height:31px;background:#efefef"></div>
<svg class="a" style="left:152px;top:730.5px" width="12" height="15"><path d="M1 1 L10.5 7.5 L1 14 Z" fill="none" stroke="#333" stroke-width="1.5" stroke-linejoin="round"/></svg>
<div class="a" style="left:180px;top:722px;width:7.5px;height:31px;background:#72d65c"></div>
<svg class="a" style="left:192.5px;top:729px" width="26" height="17"><path d="M1 8.5 Q13 -4 25 8.5 Q13 21 1 8.5 Z" fill="#8e8e8e"/><circle cx="13" cy="8.5" r="4.3" fill="#e8e8e8"/><circle cx="13" cy="8.5" r="2.5" fill="#8e8e8e"/></svg>
<svg class="a" style="left:233px;top:726.5px" width="23" height="22"><polygon points="1.5,5 5.5,1 21.5,1 21.5,17 17.5,21 1.5,21" fill="#e2e4ea" stroke="#6e6e6e" stroke-width="1.4" stroke-linejoin="round"/><polygon points="17.5,5 21.5,1 21.5,17 17.5,21" fill="#a9acb5"/><path d="M1.5 5 H17.5 V21" fill="none" stroke="#fff" stroke-width="0.8"/></svg>
<div class="a" style="left:141px;top:760px;width:271.6px;height:31px;background:#fafafa"></div>
<div class="a" style="left:180px;top:760px;width:232.60000000000002px;height:31px;background:#efefef"></div>
<svg class="a" style="left:152px;top:768.5px" width="12" height="15"><path d="M1 1 L10.5 7.5 L1 14 Z" fill="none" stroke="#333" stroke-width="1.5" stroke-linejoin="round"/></svg>
<div class="a" style="left:180px;top:760px;width:7.5px;height:31px;background:#e5554c"></div>
<svg class="a" style="left:192.5px;top:767px" width="26" height="17"><path d="M1 8.5 Q13 -4 25 8.5 Q13 21 1 8.5 Z" fill="#8e8e8e"/><circle cx="13" cy="8.5" r="4.3" fill="#e8e8e8"/><circle cx="13" cy="8.5" r="2.5" fill="#8e8e8e"/></svg>
<svg class="a" style="left:233px;top:764.5px" width="23" height="22"><polygon points="1.5,5 5.5,1 21.5,1 21.5,17 17.5,21 1.5,21" fill="#e2e4ea" stroke="#6e6e6e" stroke-width="1.4" stroke-linejoin="round"/><polygon points="17.5,5 21.5,1 21.5,17 17.5,21" fill="#a9acb5"/><path d="M1.5 5 H17.5 V21" fill="none" stroke="#fff" stroke-width="0.8"/></svg>
<div class="a" style="left:141px;top:798px;width:265px;height:31px;background:#fafafa"></div>
<div class="a" style="left:180px;top:798px;width:226px;height:31px;background:#efefef"></div>
<svg class="a" style="left:152px;top:806.5px" width="12" height="15"><path d="M1 1 L10.5 7.5 L1 14 Z" fill="none" stroke="#333" stroke-width="1.5" stroke-linejoin="round"/></svg>
<div class="a" style="left:180px;top:798px;width:7.5px;height:31px;background:#63c9f3"></div>
<svg class="a" style="left:192.5px;top:804.5px" width="26" height="18"><path d="M1.5 9 Q13 -3 24.5 9 Q13 21 1.5 9 Z" fill="none" stroke="#9a9a9a" stroke-width="1.6"/><circle cx="13" cy="9" r="4" fill="none" stroke="#9a9a9a" stroke-width="1.6"/><path d="M5 2 L21 16" stroke="#f0f0f0" stroke-width="3.5"/><path d="M5 2 L21 16" stroke="#9a9a9a" stroke-width="1.6"/></svg>
<svg class="a" style="left:233px;top:802.5px" width="23" height="22"><polygon points="1.5,5 5.5,1 21.5,1 21.5,17 17.5,21 1.5,21" fill="#e2e4ea" stroke="#6e6e6e" stroke-width="1.4" stroke-linejoin="round"/><polygon points="17.5,5 21.5,1 21.5,17 17.5,21" fill="#a9acb5"/><path d="M1.5 5 H17.5 V21" fill="none" stroke="#fff" stroke-width="0.8"/></svg>
<div class="a" style="left:95px;top:1311px;width:886px;height:37px;background:#f1f1f1;border:1px solid #cdcdcd;border-bottom:2px solid #c4c4c4"></div>
<svg class="a" style="left:949px;top:1322px" width="15" height="15"><circle cx="7.5" cy="7.5" r="7" fill="#222"/><path d="M3.5 7.5 H11.5 M7.5 3.5 V11.5" stroke="#fff" stroke-width="2.2"/></svg>
<svg class="a" style="left:2290px;top:310px" width="160" height="170" viewBox="2290 310 160 170">
<defs><radialGradient id="vcs" cx="0.5" cy="0.5" r="0.5"><stop offset="0" stop-color="#000" stop-opacity="0.22"/><stop offset="1" stop-color="#000" stop-opacity="0"/></radialGradient></defs>
<ellipse cx="2378" cy="428" rx="62" ry="32" fill="url(#vcs)"/>
<polygon points="2374.3,330.2 2428.4,354.7 2375,383.6 2322.2,354" fill="#f1f1f2" stroke="#9a9a9a" stroke-width="1"/>
<polygon points="2322.2,354 2375,383.6 2375,445.7 2327.2,412.5" fill="#e9e9ea" stroke="#9a9a9a" stroke-width="1"/>
<polygon points="2375,383.6 2428.4,354.7 2423.3,412.5 2375,445.7" fill="#e3e3e4" stroke="#9a9a9a" stroke-width="1"/>
<text transform="matrix(0.952 0.433 -0.80 0.369 2376 356)" font-size="14" font-weight="bold" fill="#94979c" font-family="Liberation Sans" text-anchor="middle" y="5">TOP</text>
<text transform="matrix(0.54 0.303 0 1 2333 400.5)" font-size="18" font-weight="bold" fill="#94979c" font-family="Liberation Sans" x="0" y="0">FRONT</text>
<text transform="matrix(0.572 -0.31 0 1 2386 413)" font-size="18" font-weight="bold" fill="#94979c" font-family="Liberation Sans" x="0" y="0">RIGHT</text>
<path d="M2319.5 344 L2326.5 413" stroke="#6f6fdc" stroke-width="1.6"/>
<path d="M2327 413 L2383 451" stroke="#e8939a" stroke-width="1.8"/>
<text x="2311" y="341" font-size="20" fill="#6a6ad8" font-family="Liberation Sans">Z</text>
<text x="2385" y="469" font-size="20" fill="#e37a84" font-family="Liberation Sans">X</text>
</svg>
<svg class="a" style="left:1624px;top:1211px" width="44" height="28"><rect x="0.8" y="0.8" width="40.6" height="24.4" fill="#fff" stroke="#c6c6c6" stroke-width="1.5"/><path d="M1 17.5 H9 V9.3 H17.7 V17.5 H25.2 V9.3 H33 V17.5 H41 V25 H1 Z" fill="#9bd6d2" stroke="#9ab8b8" stroke-width="1"/></svg>
<div class="a" style="left:1094.5px;top:1309px;width:373px;height:37.5px;background:#f0f0f0"></div>
<svg class="a" style="left:1094px;top:1309px" width="374" height="38" viewBox="1094 1309 374 38"><defs><linearGradient id="gridg" x1="0" y1="0" x2="0" y2="1"><stop offset="0" stop-color="#d8dadd"/><stop offset="1" stop-color="#5d6168"/></linearGradient></defs>
<g fill="none" stroke="#777" stroke-width="1.3">
<ellipse cx="1111" cy="1327" rx="12" ry="5.5"/><ellipse cx="1111" cy="1327" rx="5" ry="12"/>
<rect x="1152" y="1322" width="22" height="14"/><rect x="1155" y="1326" width="16" height="7" fill="#b8bcc4"/><path d="M1154 1322 L1158 1315 L1172 1318"/>
<path d="M1197 1338 Q1192 1330 1193 1325 L1196 1326 L1198 1331 V1316 Q1200 1314 1202 1316 V1325 V1313 Q1204 1311 1206 1313 V1325 V1314 Q1208 1312 1210 1314 V1326 V1317 Q1212 1315 1214 1317 V1330 Q1213 1337 1210 1339 Z" fill="#fafafa"/>
<circle cx="1241" cy="1322" r="7.5" fill="#f6f7fa"/><path d="M1246.5 1327.5 L1254 1335" stroke-width="3"/><path d="M1251 1314 H1257 M1254 1311 V1317 M1251 1320 H1257"/>
<circle cx="1282" cy="1322" r="7.5" fill="#f6f7fa"/><rect x="1278" y="1318" width="8" height="8" fill="#e0e2e6"/><path d="M1287.5 1327.5 L1295 1335" stroke-width="3"/>
<rect x="1326" y="1316" width="24" height="17" fill="#9dbfe8" stroke="#666"/><path d="M1333 1338 H1343 M1338 1333 V1338" stroke-width="2"/>
<rect x="1375" y="1315" width="23" height="23" fill="url(#gridg)" stroke="#666" stroke-width="0.8"/>
<rect x="1425" y="1316" width="22" height="22" fill="#9dbfe8" stroke="#5a7fb8"/><path d="M1436 1316 V1338 M1425 1327 H1447" stroke="#5a7fb8"/>
</g>
<g stroke="#fff" stroke-width="1" opacity="0.95"><path d="M1375 1319 H1398 M1375 1323 H1398 M1375 1327 H1398 M1375 1331 H1398 M1375 1335 H1398 M1379 1315 V1338 M1383 1315 V1338 M1387 1315 V1338 M1391 1315 V1338 M1395 1315 V1338"/></g>
<g fill="#222"><path d="M1132.5 1324 H1141.5 L1137 1330.5 Z M1307 1324 H1316 L1311.5 1330.5 Z M1354.5 1324 H1363.5 L1359 1330.5 Z M1403.5 1324 H1412.5 L1408 1330.5 Z M1452.5 1324 H1461.5 L1457 1330.5 Z"/></g>
<path d="M1108 1327 H1114 M1111 1324 V1330" stroke="#4a8ad0" stroke-width="1.3"/>
</svg>
<svg class="a" style="left:2427px;top:1322px" width="26" height="26"><path d="M13 1 A12 12 0 1 0 13 25 H24.5 V13 A12 12 0 0 0 13 1 Z" fill="#111"/><path d="M5 13 L14 7 M6.5 16.5 L17 9.5 M10 19 L18 13.5" stroke="#f2f2f2" stroke-width="1.6"/></svg>
<div class="a" style="left:88px;top:1356px;width:2384px;height:118px;background:#f0f0f0"></div>
<div class="a" style="left:88px;top:1356px;width:2384px;height:4.5px;background:#cdcdcd"></div>
<div class="a" style="left:303px;top:1435px;width:2098px;height:1.2px;background:#d6d6d6"></div>
<svg class="a" style="left:100px;top:1385px" width="190" height="30" viewBox="100 1385 190 30"><g fill="#6a6a6a">
<rect x="106.8" y="1390.5" width="3.3" height="19.2"/><path d="M110.1 1400.1 L125.1 1390.5 V1409.7 Z"/>
<path d="M145.3 1400.3 L161.7 1391.4 V1409.3 Z"/><rect x="162.7" y="1396" width="2.8" height="8.5"/>
<path d="M185.8 1387.6 L205 1399.5 L185.8 1411.3 Z"/>
<rect x="223.9" y="1396" width="3.2" height="8.5"/><path d="M228.7 1391.4 L244.5 1400.3 L228.7 1409.3 Z"/>
<path d="M264.7 1390.5 L279.1 1400.1 L264.7 1409.7 Z"/><rect x="279.1" y="1390.5" width="3.3" height="19.2"/>
</g></svg>
<div class="a" style="left:315.1px;top:1372px;width:31.599999999999966px;height:9px;background:#e88ac6"></div>
<div class="a" style="left:352.6px;top:1372px;width:107.89999999999998px;height:9px;background:#f7ae66"></div>
<div class="a" style="left:466.4px;top:1372px;width:31.600000000000023px;height:9px;background:#ec8cc8"></div>
<div class="a" style="left:504.1px;top:1372px;width:31.600000000000023px;height:9px;background:#e88ac6"></div>
<div class="a" style="left:542px;top:1372px;width:25.700000000000045px;height:9px;background:#e88ac6"></div>
<div class="a" style="left:580.2px;top:1372px;width:24.899999999999977px;height:9px;background:#e88ac6"></div>
<div class="a" style="left:618px;top:1372px;width:182.29999999999995px;height:9px;background:#e88ac6"></div>
<div class="a" style="left:807.1px;top:1372px;width:31.100000000000023px;height:9px;background:#f7ae66"></div>
<div class="a" style="left:845px;top:1372px;width:31px;height:9px;background:#e88ac6"></div>
<div class="a" style="left:882.8px;top:1372px;width:31.0px;height:9px;background:#f7ae66"></div>
<div class="a" style="left:545.3px;top:1372px;width:10px;height:9px;background:#72d65c"></div>
<div class="a" style="left:582.8px;top:1372px;width:10px;height:9px;background:#e5554c"></div>
<div class="a" style="left:480px;top:1372px;width:10px;height:9px;background:#f78ad8"></div>
<div class="a" style="left:852px;top:1372px;width:17px;height:9px;background:#63c9f3"></div>
<svg class="a" style="left:300px;top:1410px" width="640" height="25" viewBox="300 1410 640 25"><g stroke="#c8c8c8" stroke-width="2.2" fill="none"><path d="M331.5 1424 H898.6"/><path d="M331.5 1415 V1424"/><path d="M369 1415 V1424"/><path d="M407 1415 V1424"/><path d="M445 1415 V1424"/><path d="M520.5 1415 V1424"/><path d="M634 1415 V1424"/><path d="M672 1415 V1424"/><path d="M709.6 1415 V1424"/><path d="M747.4 1415 V1424"/><path d="M785.2 1415 V1424"/><path d="M823 1415 V1424"/><path d="M898.6 1415 V1424"/></g><rect x="473" y="1415.5" width="14.5" height="14.5" fill="#7a7a7a"/><path d="M480.25 1418 V1428 M475.5 1422.75 H485" stroke="#fff" stroke-width="2.4"/><rect x="548.9" y="1415.5" width="14.5" height="14.5" fill="#7a7a7a"/><path d="M556.15 1418 V1428 M551.4 1422.75 H560.9" stroke="#fff" stroke-width="2.4"/><rect x="586.7" y="1415.5" width="14.5" height="14.5" fill="#7a7a7a"/><path d="M593.95 1418 V1428 M589.2 1422.75 H598.7" stroke="#fff" stroke-width="2.4"/><rect x="851.4" y="1415.5" width="14.5" height="14.5" fill="#7a7a7a"/><path d="M858.65 1418 V1428 M853.9 1422.75 H863.4" stroke="#fff" stroke-width="2.4"/></svg>
<svg class="a" style="left:318.4px;top:1384.5px" width="25" height="25"><path d="M1.5 23.5 V9 L8 3 H15 L22 14 V19 L17.5 23.5 Z" fill="#dcdcdc" stroke="#5a5a5a" stroke-width="1.8" stroke-linejoin="round"/><polygon points="18,3 19.5,7 23.5,6 21,9.5 24,12 20,12.5 20,16.5 17.5,13.5 14.5,16 15.5,12 11.5,11 15,9 13.5,5.5 17,7" fill="#f6a71c"/></svg>
<svg class="a" style="left:355.9px;top:1384.5px" width="26" height="25"><g fill="#3b8fdc"><rect x="0" y="0" width="3" height="3"/><rect x="21" y="0" width="3" height="3"/><rect x="0" y="21" width="3" height="3"/><rect x="5" y="5" width="2.5" height="2.5"/><rect x="15" y="5" width="2.5" height="2.5"/><rect x="5" y="15" width="2.5" height="2.5"/></g><path d="M3 1.5 H21 M1.5 3 V21 M22.5 3 V12 M3 22.5 H12 M7.5 6.2 H15 M6.2 7.5 V15 M16 8 Q15 15 8 16.5" fill="none" stroke="#7d8fa8" stroke-width="1"/><path d="M12 24 L14 19 L22 11 L25 14 L17 22 Z" fill="#f2b545"/><path d="M21.5 11.5 L24.5 14.5 L26 13 L23 10 Z" fill="#e33"/></svg>
<svg class="a" style="left:394.7px;top:1384.5px" width="25" height="25"><polygon points="0.5,21 14,21 18,17 18,21 14,25 0.5,25" fill="#b8b8b8"/><polygon points="0.5,4 4.5,0.5 18,0.5 18,17 14,21 0.5,21" fill="#5eaae8"/><polygon points="14,4 18,0.5 18,17 14,21" fill="#3f8ed4"/><polygon points="0.5,4 4.5,0.5 18,0.5 14,4" fill="#8fcaf8"/><path d="M22 21 V3" stroke="#222" stroke-width="1.2"/><path d="M20 5 L22 1 L24 5 Z" fill="#222"/></svg>
<svg class="a" style="left:432.2px;top:1384.5px" width="26" height="25"><g fill="#3b8fdc"><rect x="0" y="0" width="3" height="3"/><rect x="21" y="0" width="3" height="3"/><rect x="0" y="21" width="3" height="3"/><rect x="5" y="5" width="2.5" height="2.5"/><rect x="15" y="5" width="2.5" height="2.5"/><rect x="5" y="15" width="2.5" height="2.5"/></g><path d="M3 1.5 H21 M1.5 3 V21 M22.5 3 V12 M3 22.5 H12 M7.5 6.2 H15 M6.2 7.5 V15 M16 8 Q15 15 8 16.5" fill="none" stroke="#7d8fa8" stroke-width="1"/><path d="M12 24 L14 19 L22 11 L25 14 L17 22 Z" fill="#f2b545"/><path d="M21.5 11.5 L24.5 14.5 L26 13 L23 10 Z" fill="#e33"/></svg>
<svg class="a" style="left:469.7px;top:1392px" width="26" height="10"><g fill="#dcdcdc" stroke="#555" stroke-width="1.6"><rect x="1" y="1" width="5.5" height="8"/><rect x="10" y="1" width="5.5" height="8"/><rect x="19" y="1" width="5.5" height="8" fill="#bbb"/></g></svg>
<svg class="a" style="left:507.2px;top:1384.5px" width="26" height="25"><rect x="0.7" y="0.7" width="11" height="23.5" fill="#f7f7f7" stroke="#777" stroke-width="1.2"/><rect x="11.5" y="0" width="14" height="11" fill="#5eaae8"/></svg>
<svg class="a" style="left:545.3px;top:1392px" width="26" height="10"><g fill="#dcdcdc" stroke="#555" stroke-width="1.6"><rect x="1" y="1" width="5.5" height="8"/><rect x="10" y="1" width="5.5" height="8"/><rect x="19" y="1" width="5.5" height="8" fill="#bbb"/></g></svg>
<svg class="a" style="left:582.8px;top:1392px" width="26" height="10"><g fill="#dcdcdc" stroke="#555" stroke-width="1.6"><rect x="1" y="1" width="5.5" height="8"/><rect x="10" y="1" width="5.5" height="8"/><rect x="19" y="1" width="5.5" height="8" fill="#bbb"/></g></svg>
<svg class="a" style="left:620.7px;top:1384.5px" width="26" height="25"><rect x="0.7" y="0.7" width="11" height="23.5" fill="#f7f7f7" stroke="#777" stroke-width="1.2"/><rect x="11.5" y="0" width="14" height="11" fill="#5eaae8"/></svg>
<svg class="a" style="left:658.5px;top:1390px" width="26" height="15"><circle cx="17.5" cy="7.5" r="6.5" fill="#a9c6ec" stroke="#3d4f6a" stroke-width="1.3"/><path d="M1 7.5 H12" stroke="#111" stroke-width="2.2"/><path d="M0 7.5 L6 3 V12 Z" fill="#111"/></svg>
<svg class="a" style="left:696px;top:1390px" width="26" height="15"><circle cx="17.5" cy="7.5" r="6.5" fill="#a9c6ec" stroke="#3d4f6a" stroke-width="1.3"/><path d="M1 7.5 H12" stroke="#111" stroke-width="2.2"/><path d="M0 7.5 L6 3 V12 Z" fill="#111"/></svg>
<svg class="a" style="left:734px;top:1390px" width="26" height="15"><circle cx="17.5" cy="7.5" r="6.5" fill="#a9c6ec" stroke="#3d4f6a" stroke-width="1.3"/><path d="M1 7.5 H12" stroke="#111" stroke-width="2.2"/><path d="M0 7.5 L6 3 V12 Z" fill="#111"/></svg>
<svg class="a" style="left:772px;top:1390px" width="26" height="15"><circle cx="17.5" cy="7.5" r="6.5" fill="#a9c6ec" stroke="#3d4f6a" stroke-width="1.3"/><path d="M1 7.5 H12" stroke="#111" stroke-width="2.2"/><path d="M0 7.5 L6 3 V12 Z" fill="#111"/></svg>
<svg class="a" style="left:810px;top:1384.5px" width="26" height="25"><g fill="#3b8fdc"><rect x="0" y="0" width="3" height="3"/><rect x="21" y="0" width="3" height="3"/><rect x="0" y="21" width="3" height="3"/><rect x="5" y="5" width="2.5" height="2.5"/><rect x="15" y="5" width="2.5" height="2.5"/><rect x="5" y="15" width="2.5" height="2.5"/></g><path d="M3 1.5 H21 M1.5 3 V21 M22.5 3 V12 M3 22.5 H12 M7.5 6.2 H15 M6.2 7.5 V15 M16 8 Q15 15 8 16.5" fill="none" stroke="#7d8fa8" stroke-width="1"/><path d="M12 24 L14 19 L22 11 L25 14 L17 22 Z" fill="#f2b545"/><path d="M21.5 11.5 L24.5 14.5 L26 13 L23 10 Z" fill="#e33"/></svg>
<svg class="a" style="left:847.6px;top:1392px" width="26" height="10"><g fill="#dcdcdc" stroke="#555" stroke-width="1.6"><rect x="1" y="1" width="5.5" height="8"/><rect x="10" y="1" width="5.5" height="8"/><rect x="19" y="1" width="5.5" height="8" fill="#bbb"/></g></svg>
<svg class="a" style="left:885.4px;top:1384.5px" width="26" height="25"><g fill="#3b8fdc"><rect x="0" y="0" width="3" height="3"/><rect x="21" y="0" width="3" height="3"/><rect x="0" y="21" width="3" height="3"/><rect x="5" y="5" width="2.5" height="2.5"/><rect x="15" y="5" width="2.5" height="2.5"/><rect x="5" y="15" width="2.5" height="2.5"/></g><path d="M3 1.5 H21 M1.5 3 V21 M22.5 3 V12 M3 22.5 H12 M7.5 6.2 H15 M6.2 7.5 V15 M16 8 Q15 15 8 16.5" fill="none" stroke="#7d8fa8" stroke-width="1"/><path d="M12 24 L14 19 L22 11 L25 14 L17 22 Z" fill="#f2b545"/><path d="M21.5 11.5 L24.5 14.5 L26 13 L23 10 Z" fill="#e33"/></svg>
<svg class="a" style="left:907px;top:1374px" width="22" height="52"><path d="M1 1 H20 L13 10 V50 H8.5 V10 Z" fill="#6a6a6a"/><rect x="1" y="1" width="19" height="4" fill="#6a6a6a"/></svg>
<svg class="a" style="left:2427px;top:1386px" width="26" height="26"><polygon points="25.5,13.0 25.3,15.4 22.1,16.8 21.1,18.4 21.8,21.8 19.9,23.4 16.8,22.1 14.9,22.6 13.0,25.5 10.6,25.3 9.2,22.1 7.6,21.1 4.2,21.8 2.6,19.9 3.9,16.8 3.4,14.9 0.5,13.0 0.7,10.6 3.9,9.2 4.9,7.6 4.2,4.2 6.1,2.6 9.2,3.9 11.1,3.4 13.0,0.5 15.4,0.7 16.8,3.9 18.4,4.9 21.8,4.2 23.4,6.1 22.1,9.2 22.6,11.1" fill="#767676"/><circle cx="13" cy="13" r="4.2" fill="#f0f0f0"/></svg>
<svg class="a" style="left:97.8px;top:1447.8px" width="15" height="15"><circle cx="7.5" cy="7.5" r="7" fill="#222"/><path d="M3.5 7.5 H11.5 M7.5 3.5 V11.5" stroke="#fff" stroke-width="2.2"/></svg>
<div class="a tl" style="left:133.8px;top:306.9px;font-size:17.5px;color:#555;letter-spacing:-1.86px;">BROWSER</div>
<div class="a tl" style="left:250.6px;top:350.8px;font-size:17.5px;font-weight:bold;color:#ffffff;letter-spacing:0.90px;">Inlay Fit Test v49</div>
<div class="a tl" style="left:231.5px;top:388.2px;font-size:17.5px;color:#3d3d3d;letter-spacing:0.69px;">Document Settings</div>
<div class="a tl" style="left:231.5px;top:426.2px;font-size:17.5px;color:#3d3d3d;letter-spacing:0.46px;">Named Views</div>
<div class="a tl" style="left:270.3px;top:464.2px;font-size:17.5px;color:#3d3d3d;letter-spacing:1.17px;">Origin</div>
<div class="a tl" style="left:270.3px;top:502.2px;font-size:17.5px;color:#3d3d3d;letter-spacing:0.64px;">Relationships</div>
<div class="a tl" style="left:278.8px;top:540.2px;font-size:17.5px;color:#3d3d3d;letter-spacing:0.06px;">Basic Shape:1</div>
<div class="a tl" style="left:278.4px;top:578.2px;font-size:17.5px;color:#3d3d3d;letter-spacing:0.81px;">Text Pocket:1</div>
<div class="a tl" style="left:278.4px;top:616.2px;font-size:17.5px;color:#3d3d3d;letter-spacing:0.90px;">Text 1 Inlay:1</div>
<div class="a tl" style="left:278.4px;top:654.2px;font-size:17.5px;color:#3d3d3d;letter-spacing:0.92px;">Text 1 Plug:1</div>
<div class="a tl" style="left:278.4px;top:692.2px;font-size:17.5px;color:#3d3d3d;letter-spacing:0.72px;">Text 1 Plug Stock:1</div>
<div class="a tl" style="left:278.4px;top:730.2px;font-size:17.5px;color:#3d3d3d;letter-spacing:0.90px;">Text 2 Inlay:1</div>
<div class="a tl" style="left:278.4px;top:768.2px;font-size:17.5px;color:#3d3d3d;letter-spacing:0.90px;">Text 3 Inlay:1</div>
<div class="a tl" style="left:278.4px;top:806.2px;font-size:17.5px;color:#3d3d3d;letter-spacing:0.52px;">Labels Inlay:1</div>
<div class="a tl" style="left:133.5px;top:1322.0px;font-size:17.5px;color:#555;letter-spacing:-0.55px;">COMMENTS</div>
<div class="a tl" style="left:127.1px;top:1446.6px;font-size:17.5px;color:#555;letter-spacing:-0.29px;">TEXT COMMANDS</div>
</div>
<svg class="a" style="left:0;top:0" width="2560" height="1591" viewBox="0 0 2560 1591">
<defs>
<clipPath id="cTop"><polygon points="1526,347 1934,582 1033.5,1101.5 625.5,866.5"/></clipPath>
<clipPath id="cLeft"><polygon points="625.5,866.5 1033.5,1101.5 1033.5,1297.5 625.5,1062.5"/></clipPath>
<clipPath id="cRight"><polygon points="1033.5,1101.5 1934,582 1934,778 1033.5,1297.5"/></clipPath>
<filter id="gBand" x="0" y="0" width="1" height="1" filterUnits="objectBoundingBox" color-interpolation-filters="sRGB"><feTurbulence type="fractalNoise" baseFrequency="0.02 0.0018" numOctaves="2" seed="5"/><feColorMatrix type="matrix" values="0 0 0 0 0.8  0 0 0 0 0.46  0 0 0 0 0.26  1.2 0 0 0 -0.52"/></filter>
<filter id="gLight" x="0" y="0" width="1" height="1" filterUnits="objectBoundingBox" color-interpolation-filters="sRGB"><feTurbulence type="fractalNoise" baseFrequency="0.05 0.003" numOctaves="3" seed="9"/><feColorMatrix type="matrix" values="0 0 0 0 1.0  0 0 0 0 0.72  0 0 0 0 0.56  1.8 0 0 0 -0.8"/></filter>
<filter id="gDark" x="0" y="0" width="1" height="1" filterUnits="objectBoundingBox" color-interpolation-filters="sRGB"><feTurbulence type="fractalNoise" baseFrequency="0.25 0.006" numOctaves="2" seed="21"/><feColorMatrix type="matrix" values="0 0 0 0 0.72  0 0 0 0 0.4  0 0 0 0 0.24  1.4 0 0 0 -0.72"/></filter>
<filter id="sNoise" x="0" y="0" width="1" height="1" filterUnits="objectBoundingBox" color-interpolation-filters="sRGB"><feTurbulence type="fractalNoise" baseFrequency="0.12 0.2" numOctaves="3" seed="4"/><feColorMatrix type="matrix" values="0 0 0 0 0.72  0 0 0 0 0.42  0 0 0 0 0.26  1.6 0 0 0 -0.72"/></filter>
<filter id="sNoise2" x="0" y="0" width="1" height="1" filterUnits="objectBoundingBox" color-interpolation-filters="sRGB"><feTurbulence type="fractalNoise" baseFrequency="0.2 0.35" numOctaves="2" seed="7"/><feColorMatrix type="matrix" values="0 0 0 0 0.93  0 0 0 0 0.7  0 0 0 0 0.52  1.8 0 0 0 -0.95"/></filter>
<filter id="bl15" x="-10%" y="-10%" width="120%" height="120%"><feGaussianBlur stdDeviation="1.5"/></filter>
<filter id="bl3" x="-10%" y="-10%" width="120%" height="120%"><feGaussianBlur stdDeviation="2.5"/></filter>
<filter id="bl8" x="-20%" y="-20%" width="140%" height="140%"><feGaussianBlur stdDeviation="8"/></filter>
<linearGradient id="gTop" gradientUnits="userSpaceOnUse" x1="700" y1="500" x2="1700" y2="950"><stop offset="0" stop-color="#df8f62"/><stop offset="0.5" stop-color="#e4976a"/><stop offset="1" stop-color="#e79c6e"/></linearGradient>
<linearGradient id="arch" x1="0" y1="0" x2="1" y2="0"><stop offset="0" stop-color="#a35a33" stop-opacity="0.5"/><stop offset="0.22" stop-color="#a35a33" stop-opacity="0.3"/><stop offset="0.5" stop-color="#a35a33" stop-opacity="0"/></linearGradient>
<linearGradient id="archL" x1="0" y1="1" x2="0" y2="0"><stop offset="0" stop-color="#a35a33" stop-opacity="0.45"/><stop offset="0.5" stop-color="#a35a33" stop-opacity="0.28"/><stop offset="1" stop-color="#a35a33" stop-opacity="0.1"/></linearGradient>
</defs>
<polygon points="1526,347 1934,582 1033.5,1101.5 625.5,866.5" fill="url(#gTop)"/>
<g clip-path="url(#cTop)">
<g transform="matrix(0.86809 0.5 -0.86587 0.49952 1526 347)"><g transform="rotate(24 235 520)">
<rect x="-200" y="-200" width="870" height="1440" filter="url(#gBand)"/>
<rect x="-200" y="-200" width="870" height="1440" filter="url(#gDark)"/>
<rect x="-200" y="-200" width="870" height="1440" filter="url(#gLight)"/>
<path d="M198 416 L198 1266" stroke="#f6c6a8" stroke-width="1.7" stroke-opacity="0.66" fill="none"/>
<path d="M201 416 L201 1266" stroke="#b86a44" stroke-width="0.9" stroke-opacity="0.35" stroke-dasharray="3 2" fill="none"/>
<path d="M-8 363 L-3 1023" stroke="#f6c6a8" stroke-width="1.3" stroke-opacity="0.56" fill="none"/>
<path d="M-6 363 L-6 1023" stroke="#b86a44" stroke-width="0.9" stroke-opacity="0.35" stroke-dasharray="3 2" fill="none"/>
<path d="M-80 691 L-88 1391" stroke="#f6c6a8" stroke-width="2.2" stroke-opacity="0.79" fill="none"/>
<path d="M-78 691 L-78 1391" stroke="#b86a44" stroke-width="0.9" stroke-opacity="0.35" stroke-dasharray="3 2" fill="none"/>
<path d="M354 477 L346 829" stroke="#f6c6a8" stroke-width="1.7" stroke-opacity="0.47" fill="none"/>
<path d="M356 477 L356 829" stroke="#b86a44" stroke-width="0.9" stroke-opacity="0.35" stroke-dasharray="3 2" fill="none"/>
<path d="M-4 66 L-4 336" stroke="#f6c6a8" stroke-width="1.6" stroke-opacity="0.74" fill="none"/>
<path d="M-1 66 L-1 336" stroke="#b86a44" stroke-width="0.9" stroke-opacity="0.35" stroke-dasharray="3 2" fill="none"/>
<path d="M250 504 L252 1079" stroke="#f6c6a8" stroke-width="1.7" stroke-opacity="0.55" fill="none"/>
<path d="M252 504 L252 1079" stroke="#b86a44" stroke-width="0.9" stroke-opacity="0.35" stroke-dasharray="3 2" fill="none"/>
<path d="M618 895 L622 1691" stroke="#f6c6a8" stroke-width="1.5" stroke-opacity="0.53" fill="none"/>
<path d="M620 895 L620 1691" stroke="#b86a44" stroke-width="0.9" stroke-opacity="0.35" stroke-dasharray="3 2" fill="none"/>
<path d="M73 -123 L71 625" stroke="#f6c6a8" stroke-width="2.0" stroke-opacity="0.59" fill="none"/>
<path d="M75 -123 L75 625" stroke="#b86a44" stroke-width="0.9" stroke-opacity="0.35" stroke-dasharray="3 2" fill="none"/>
<path d="M588 732 L583 982" stroke="#f6c6a8" stroke-width="2.1" stroke-opacity="0.61" fill="none"/>
<path d="M590 732 L590 982" stroke="#b86a44" stroke-width="0.9" stroke-opacity="0.35" stroke-dasharray="3 2" fill="none"/>
<path d="M605 237 L607 535" stroke="#f6c6a8" stroke-width="2.0" stroke-opacity="0.54" fill="none"/>
<path d="M607 237 L607 535" stroke="#b86a44" stroke-width="0.9" stroke-opacity="0.35" stroke-dasharray="3 2" fill="none"/>
<path d="M-83 166 L-79 1042" stroke="#f6c6a8" stroke-width="1.3" stroke-opacity="0.54" fill="none"/>
<path d="M-81 166 L-81 1042" stroke="#b86a44" stroke-width="0.9" stroke-opacity="0.35" stroke-dasharray="3 2" fill="none"/>
<path d="M-72 -134 L-77 634" stroke="#f6c6a8" stroke-width="1.8" stroke-opacity="0.61" fill="none"/>
<path d="M-70 -134 L-70 634" stroke="#b86a44" stroke-width="0.9" stroke-opacity="0.35" stroke-dasharray="3 2" fill="none"/>
<path d="M-3 605 L-1 940" stroke="#f6c6a8" stroke-width="1.3" stroke-opacity="0.60" fill="none"/>
<path d="M-1 605 L-1 940" stroke="#b86a44" stroke-width="0.9" stroke-opacity="0.35" stroke-dasharray="3 2" fill="none"/>
<path d="M14 97 L19 978" stroke="#f6c6a8" stroke-width="1.5" stroke-opacity="0.76" fill="none"/>
<path d="M16 97 L16 978" stroke="#b86a44" stroke-width="0.9" stroke-opacity="0.35" stroke-dasharray="3 2" fill="none"/>
<path d="M12 234 L15 1039" stroke="#f6c6a8" stroke-width="1.3" stroke-opacity="0.80" fill="none"/>
<path d="M14 234 L14 1039" stroke="#b86a44" stroke-width="0.9" stroke-opacity="0.35" stroke-dasharray="3 2" fill="none"/>
<path d="M14 84 L11 836" stroke="#f6c6a8" stroke-width="1.5" stroke-opacity="0.48" fill="none"/>
<path d="M16 84 L16 836" stroke="#b86a44" stroke-width="0.9" stroke-opacity="0.35" stroke-dasharray="3 2" fill="none"/>
</g></g></g>
<polygon points="625.5,866.5 1033.5,1101.5 1033.5,1297.5 625.5,1062.5" fill="#d18d65"/>
<g clip-path="url(#cLeft)">
<g transform="matrix(0.86809 0.5 0 1 625.5 866.5)">
<rect x="-20" y="-20" width="520" height="240" filter="url(#sNoise)"/>
<ellipse cx="34" cy="39" rx="38" ry="110" fill="url(#archL)" opacity="1"/>
<ellipse cx="97" cy="66" rx="37" ry="110" fill="url(#archL)" opacity="0.95"/>
<ellipse cx="195" cy="102" rx="39" ry="110" fill="url(#archL)" opacity="0.8"/>
<ellipse cx="286" cy="118" rx="40" ry="110" fill="url(#archL)" opacity="0.7"/>
<ellipse cx="382" cy="130" rx="42" ry="110" fill="url(#archL)" opacity="0.6"/>
<rect x="-20" y="-20" width="520" height="240" filter="url(#sNoise2)"/>
</g></g>
<polygon points="1033.5,1101.5 1934,582 1934,778 1033.5,1297.5" fill="#cf8e62"/>
<g clip-path="url(#cRight)">
<g transform="matrix(0.86587 -0.49952 0 1 1033.5 1101.5)">
<rect x="-20" y="-20" width="1080" height="240" filter="url(#sNoise)"/>
<circle cx="217" cy="150" r="170" fill="url(#arch)" opacity="0.9"/>
<circle cx="342" cy="150" r="170" fill="url(#arch)" opacity="1"/>
<circle cx="469" cy="150" r="170" fill="url(#arch)" opacity="1"/>
<circle cx="656" cy="150" r="180" fill="url(#arch)" opacity="1"/>
<circle cx="875" cy="150" r="200" fill="url(#arch)" opacity="1"/>
<ellipse cx="960" cy="98" rx="165" ry="68" fill="url(#arch)" opacity="1"/>
<rect x="-20" y="-20" width="1080" height="240" filter="url(#sNoise2)"/>
</g></g>
<g transform="matrix(0.86809 0.5 -0.86587 0.49952 1526 347)" fill="#3a3633" stroke="#22160f" stroke-width="0">
<path transform="translate(27.8 315) scale(0.315 -0.307)" stroke-width="4.5" d="M706 0V19C661 22 651 32 616 106L367 674H347L139 183C75 37 63 22 15 19V0H213V19C165 19 145 32 145 60C145 72 148 86 153 99L199 216H461L502 120C514 92 521 67 521 52C521 43 515 32 507 28C495 21 487 19 451 19V0ZM447 257H216L331 532Z"/>
<path transform="translate(259.4 315) scale(0.2849 -0.3029)" stroke-width="4.5" d="M593 492 587 662H23L17 492H41C65 602 88 620 200 620H254V120C254 35 243 24 160 19V0H452V19C370 23 356 36 356 109V620H410C524 620 546 602 569 492Z"/>
<path transform="translate(27.8 672.5) scale(0.315 -0.307)" stroke-width="4.5" d="M706 0V19C661 22 651 32 616 106L367 674H347L139 183C75 37 63 22 15 19V0H213V19C165 19 145 32 145 60C145 72 148 86 153 99L199 216H461L502 120C514 92 521 67 521 52C521 43 515 32 507 28C495 21 487 19 451 19V0ZM447 257H216L331 532Z"/>
<path transform="translate(259.4 672.5) scale(0.2849 -0.3029)" stroke-width="4.5" d="M593 492 587 662H23L17 492H41C65 602 88 620 200 620H254V120C254 35 243 24 160 19V0H452V19C370 23 356 36 356 109V620H410C524 620 546 602 569 492Z"/>
<path transform="translate(27.8 1001) scale(0.315 -0.307)" stroke-width="4.5" d="M706 0V19C661 22 651 32 616 106L367 674H347L139 183C75 37 63 22 15 19V0H213V19C165 19 145 32 145 60C145 72 148 86 153 99L199 216H461L502 120C514 92 521 67 521 52C521 43 515 32 507 28C495 21 487 19 451 19V0ZM447 257H216L331 532Z"/>
<path transform="translate(259.4 1001) scale(0.2849 -0.3029)" stroke-width="4.5" d="M593 492 587 662H23L17 492H41C65 602 88 620 200 620H254V120C254 35 243 24 160 19V0H452V19C370 23 356 36 356 109V620H410C524 620 546 602 569 492Z"/>
</g>
<g transform="matrix(0.86809 0.5 -0.86587 0.49952 1526 347)" font-family="Liberation Sans" font-size="73">
<text x="122.7" y="82" fill="#6f452e" stroke="#3a2418" stroke-width="1.8" font-weight="bold">0.020</text>
<text x="122.7" y="82" fill="#a9704c" stroke="none" transform="translate(2.5 -3.5)">0.020</text>
<text x="122.7" y="438" fill="#6f452e" stroke="#3a2418" stroke-width="1.8" font-weight="bold">0.060</text>
<text x="122.7" y="438" fill="#a9704c" stroke="none" transform="translate(2.5 -3.5)">0.060</text>
<text x="122.7" y="773" fill="#6f452e" stroke="#3a2418" stroke-width="1.8" font-weight="bold">0.100</text>
<text x="122.7" y="773" fill="#a9704c" stroke="none" transform="translate(2.5 -3.5)">0.100</text>
</g>
<g fill="none" stroke="#3b2c24" stroke-width="1.3" stroke-linejoin="round">
<polygon points="1526,347 1934,582 1934,778 1033.5,1297.5 625.5,1062.5 625.5,866.5"/>
<polyline points="625.5,866.5 1033.5,1101.5 1934,582"/>
<line x1="1033.5" y1="1101.5" x2="1033.5" y2="1297.5"/>
</g>
</svg>
</body></html>
